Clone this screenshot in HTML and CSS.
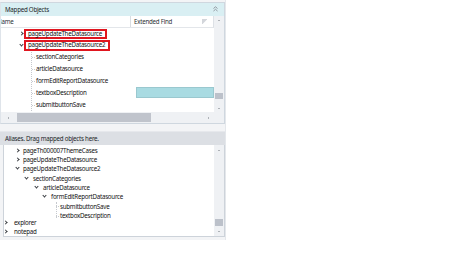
FILE: index.html
```html
<!DOCTYPE html>
<html>
<head>
<meta charset="utf-8">
<link rel="stylesheet" href="styles.css">
</head>
<body>
<div class="frame">
  <section class="panel top">
    <div class="phead">
      <span>Mapped Objects</span>
      <svg class="collapse" width="5" height="6" viewBox="0 0 5 6"><polyline points="0.5,2.5 2.5,0.8 4.5,2.5" fill="none" stroke="#8a8f98" stroke-width="0.9"/><polyline points="0.5,5 2.5,3.3 4.5,5" fill="none" stroke="#8a8f98" stroke-width="0.9"/></svg>
    </div>
    <div class="gridwrap">
      <div class="gridmain">
        <div class="colhdr">
          <div class="c1"><span class="nm">Name</span></div>
          <div class="c2"><span>Extended Find</span>
            <svg class="funnel" width="5" height="5" viewBox="0 0 5 5"><polygon points="0,0 5,0 5,0.6 0.6,5 0,5" fill="#d3d6db"/></svg>
          </div>
        </div>
        <div class="rows">
          <div class="row"><div class="c1 lv0"><i class="chev r"></i><span class="lbl boxed">pageUpdateTheDatasource</span></div><div class="c2"></div></div>
          <div class="row"><div class="c1 lv0"><i class="chev d"></i><span class="lbl boxed">pageUpdateTheDatasource2</span></div><div class="c2"></div></div>
          <div class="kids">
            <div class="row"><div class="c1 lv1"><span class="lbl tick">sectionCategories</span></div><div class="c2"></div></div>
            <div class="row"><div class="c1 lv1"><span class="lbl tick">articleDatasource</span></div><div class="c2"></div></div>
            <div class="row"><div class="c1 lv1"><span class="lbl tick">formEditReportDatasource</span></div><div class="c2"></div></div>
            <div class="row"><div class="c1 lv1"><span class="lbl tick">textboxDescription</span></div><div class="c2"><div class="cell-sel"></div></div></div>
            <div class="row"><div class="c1 lv1"><span class="lbl tick">submitbuttonSave</span></div><div class="c2"></div></div>
          </div>
        </div>
      </div>
      <div class="vscroll vs-top">
        <i class="tri up"></i>
        <div class="track"><div class="thumb"></div></div>
        <i class="tri dn"></i>
      </div>
    </div>
    <div class="hrow">
      <div class="hscroll">
        <i class="tri lf"></i>
        <div class="htrack"><div class="hthumb"></div></div>
        <i class="tri rt"></i>
      </div>
      <div class="corner"></div>
    </div>
  </section>

  <section class="panel bottom">
    <div class="phead gray"><span>Aliases. Drag mapped objects here.</span></div>
    <div class="tree">
      <div class="tlist">
        <div class="trow b1"><i class="chev r"></i><span>pageTh000007ThemeCases</span></div>
        <div class="trow b1"><i class="chev r"></i><span>pageUpdateTheDatasource</span></div>
        <div class="trow b1"><i class="chev d"></i><span>pageUpdateTheDatasource2</span></div>
        <div class="trow b2"><i class="chev d"></i><span>sectionCategories</span></div>
        <div class="trow b3"><i class="chev d"></i><span>articleDatasource</span></div>
        <div class="trow b4"><i class="chev d"></i><span>formEditReportDatasource</span></div>
        <div class="leaves">
          <div class="trow b5"><span class="tick">submitbuttonSave</span></div>
          <div class="trow b5"><span class="tick">textboxDescription</span></div>
        </div>
        <div class="trow b0"><i class="chev r"></i><span>explorer</span></div>
        <div class="trow b0"><i class="chev r"></i><span>notepad</span></div>
      </div>
      <div class="vscroll vs-bot">
        <i class="tri up"></i>
        <div class="track"><div class="thumb"></div></div>
        <i class="tri dn"></i>
      </div>
    </div>
  </section>
</div>
</body>
</html>
```

FILE: styles.css
```css
html, body {
  margin: 0;
  padding: 0;
  background: #ffffff;
}
body {
  font-family: "Noto Sans", "Open Sans", sans-serif;
  font-size: 6.2px;
  letter-spacing: -0.25px;
  color: #121212;
  width: 450px;
  height: 253px;
  overflow: hidden;
}
.frame {
  width: 226px;
  height: 240px;
  box-sizing: border-box;
  background: #f3f4f6;
  border-right: 1px solid #e4e7eb;
  padding-top: 2px;
  display: flex;
  flex-direction: column;
  gap: 7px;
}
.panel {
  box-sizing: border-box;
  width: 225px;
  display: flex;
  flex-direction: column;
}
.panel.top {
  height: 122px;
  border: 1px solid #cfd7df;
  border-left-color: #dfe4ea;
  background: #ffffff;
}
.phead {
  height: 13px;
  flex: none;
  display: flex;
  align-items: center;
  justify-content: space-between;
  padding: 0 6px 0 4px;
  background: #d9eff3;
  color: #22262a;
}
.phead.gray {
  background: #dcdfe4;
  border-top: 1px solid #e6e8ec;
  padding-left: 5px;
}
.collapse { display: block; margin-top: -1px; }

.gridwrap {
  flex: none;
  height: 96px;
  display: flex;
}
.gridmain {
  flex: 1;
  min-width: 0;
  display: flex;
  flex-direction: column;
  overflow: hidden;
}
.colhdr {
  height: 12px;
  flex: none;
  display: flex;
  box-sizing: border-box;
  border-bottom: 1px solid #e3e6ea;
  border-right: 1px solid #dde1e6;
  color: #2f3338;
}
.colhdr .c1 {
  width: 130px;
  box-sizing: border-box;
  border-right: 1px solid #d9dde2;
  display: flex;
  align-items: center;
  overflow: hidden;
}
.nm { margin-left: -4px; }
.colhdr .c2 {
  flex: 1;
  display: flex;
  align-items: center;
  justify-content: space-between;
  padding: 0 6px 0 3px;
}
.funnel { display: block; }

.rows {
  flex: 1;
  display: flex;
  flex-direction: column;
}
.row {
  height: 11.8px;
  flex: none;
  display: flex;
}
.row .c1 {
  width: 130px;
  display: flex;
  align-items: center;
}
.row .c2 {
  flex: 1;
  display: flex;
  align-items: stretch;
  padding: 0.3px 0 0.5px 1px;
}
.cell-sel {
  flex: 1;
  background: #a9dbe2;
  border: 1px solid #9ac8cf;
  box-sizing: border-box;
}
.lv0 { padding-left: 19px; }
.kids {
  display: flex;
  flex-direction: column;
  border-left: 1px dotted #c6c9ce;
  margin-left: 30px;
}
.kids .row .c1 { width: 99px; }
.kids .lv1 { padding-left: 4px; }
.tick { position: relative; }
.tick::before {
  content: "";
  position: absolute;
  left: -4px;
  top: 50%;
  width: 3px;
  border-top: 1px dotted #c6c9ce;
}
.lbl {
  line-height: 10px;
  white-space: nowrap;
}
.boxed {
  border: 2px solid #e0161f;
  padding: 0 3px 0 2px;
  line-height: 6.5px;
  height: 6.5px;
  display: inline-block;
}

.chev {
  display: inline-block;
  flex: none;
  width: 3px;
  height: 3px;
  border-right: 0.9px solid #3a3d42;
  border-bottom: 0.9px solid #3a3d42;
  box-sizing: border-box;
}
.chev.r { transform: rotate(-45deg); margin-right: 3px; }
.chev.d { transform: rotate(45deg); margin-right: 3px; margin-top: -2px; }
.lv0 .chev { margin-right: 1px; }

.vscroll {
  width: 10px;
  flex: none;
  background: #eff1f4;
  display: flex;
  flex-direction: column;
  align-items: center;
}
.vs-top { padding: 4px 0 3px; }
.track {
  flex: 1;
  width: 100%;
  position: relative;
}
.thumb {
  position: absolute;
  left: 1px;
  right: 1px;
  background: #bcc1ca;
}
.vs-top .thumb { top: 72px; height: 6px; }
.vs-bot .thumb { top: 68px; height: 7px; }
.tri {
  width: 0;
  height: 0;
  flex: none;
  display: block;
}
.tri.up { border-left: 1.6px solid transparent; border-right: 1.6px solid transparent; border-bottom: 1.6px solid #6f747b; }
.tri.dn { border-left: 1.6px solid transparent; border-right: 1.6px solid transparent; border-top: 1.6px solid #6f747b; }
.tri.lf { border-top: 1.6px solid transparent; border-bottom: 1.6px solid transparent; border-right: 1.6px solid #6f747b; }
.tri.rt { border-top: 1.6px solid transparent; border-bottom: 1.6px solid transparent; border-left: 1.6px solid #6f747b; }

.hrow {
  flex: 1;
  display: flex;
}
.hscroll {
  flex: 1;
  display: flex;
  align-items: center;
  background: #eff1f4;
  padding: 0 5px 0 7px;
  gap: 8px;
}
.htrack {
  flex: 1;
  height: 100%;
  position: relative;
}
.hthumb {
  position: absolute;
  left: 0;
  width: 134px;
  top: 1px;
  bottom: 1px;
  background: #c0c4cc;
}
.corner {
  width: 10px;
  background: #eff1f4;
}

.panel.bottom {
  height: 106px;
}
.tree {
  flex: 1;
  margin-left: 3px;
  width: 222px;
  box-sizing: border-box;
  border: 1px solid #cdd3da;
  border-top: none;
  background: #ffffff;
  display: flex;
  overflow: hidden;
  height: 92px;
}
.tlist {
  flex: 1;
  overflow: hidden;
  padding-top: 0.5px;
}
.vs-bot { padding: 5px 0 4px; }
.trow {
  height: 9.35px;
  display: flex;
  align-items: center;
  white-space: nowrap;
}
.b0 { padding-left: 0; }
.b0 .chev.r { margin-right: 7px; }
.b1 { padding-left: 12px; }
.b2 { padding-left: 21px; }
.b3 { padding-left: 31px; }
.b4 { padding-left: 39px; }
.b2 .chev, .b3 .chev, .b4 .chev { margin-right: 5px; }
.b1 .chev { margin-right: 4px; }
.leaves {
  margin-left: 52px;
  border-left: 1px dotted #c6c9ce;
  height: 16px;
  padding-left: 3px;
}
.leaves .trow { padding-left: 0; }
```
